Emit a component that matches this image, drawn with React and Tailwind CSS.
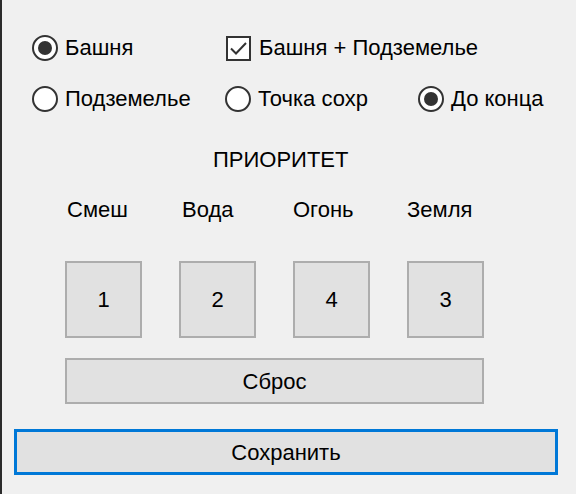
import React, { useState } from 'react';

const font = { fontFamily: '"Liberation Sans", Arial, sans-serif' };

function Radio({ checked, label, onClick }) {
  return (
    <div className="flex items-center gap-[7px] cursor-default" onClick={onClick}>
      <div className="w-[26px] h-[26px] rounded-full border-2 border-[#333333] bg-white flex items-center justify-center shrink-0">
        {checked && <div className="w-[14px] h-[14px] rounded-full bg-[#333333]" />}
      </div>
      <span className="text-[22px] leading-[26px] text-black whitespace-nowrap">{label}</span>
    </div>
  );
}

function Checkbox({ checked, label, onClick }) {
  return (
    <div className="flex items-center gap-[8px] cursor-default" onClick={onClick}>
      <div className="w-[25px] h-[25px] border-2 border-[#333333] bg-white flex items-center justify-center shrink-0">
        {checked && (
          <svg width="19" height="19" viewBox="0 0 19 19">
            <polyline points="2,9.5 7,14.5 17,4" fill="none" stroke="#333333" strokeWidth="2" />
          </svg>
        )}
      </div>
      <span className="text-[22px] leading-[26px] text-black whitespace-nowrap">{label}</span>
    </div>
  );
}

export default function App() {
  const [mode, setMode] = useState('tower');
  const [end, setEnd] = useState('end');
  const [both, setBoth] = useState(true);
  const [prio, setPrio] = useState(['1', '2', '4', '3']);

  const names = ['Смеш', 'Вода', 'Огонь', 'Земля'];

  return (
    <div className="w-[576px] h-[494px] flex overflow-hidden" style={font}>
      <div className="w-[2px] bg-[#2b2b2b]" />
      <div className="flex-1 bg-[#f0f0f0] flex flex-col">
        {/* mode options */}
        <div className="mt-[35px] pl-[30px] grid grid-cols-[193px_193px_auto] gap-y-[25px]">
          <Radio checked={mode === 'tower'} label="Башня" onClick={() => setMode('tower')} />
          <div className="col-span-2 pl-[1px]">
            <Checkbox checked={both} label="Башня + Подземелье" onClick={() => setBoth(!both)} />
          </div>
          <Radio checked={mode === 'dungeon'} label="Подземелье" onClick={() => setMode('dungeon')} />
          <Radio checked={end === 'save'} label="Точка сохр" onClick={() => setEnd('save')} />
          <Radio checked={end === 'end'} label="До конца" onClick={() => setEnd('end')} />
        </div>

        <div className="mt-[35px] pl-[211px] text-[22px] leading-[26px] text-black">ПРИОРИТЕТ</div>

        <div className="mt-[24px] pl-[63px] flex gap-[37px]">
          {names.map((n, i) => (
            <div key={n} className={'w-[77px] text-[22px] leading-[26px] text-black ' + (i === 0 ? 'pl-[2px]' : i === 1 ? 'pl-[3px]' : 'pl-[0px]')}>
              {n}
            </div>
          ))}
        </div>

        <div className="mt-[38px] pl-[63px] flex gap-[37px]">
          {prio.map((p, i) => (
            <button
              key={i}
              className="w-[77px] h-[77px] border-2 border-[#adadad] bg-[#e1e1e1] text-[22px] text-black flex items-center justify-center"
            >
              {p}
            </button>
          ))}
        </div>

        <div className="mt-[20px] pl-[63px]">
          <button
            className="w-[419px] h-[46px] border-2 border-[#adadad] bg-[#e1e1e1] text-[22px] text-black"
            onClick={() => setPrio(['1', '2', '3', '4'])}
          >
            Сброс
          </button>
        </div>

        <div className="mt-[25px] pl-[12px]">
          <button className="w-[544px] h-[46px] border-[3px] border-[#0078d7] bg-[#e1e1e1] text-[22px] text-black">
            Сохранить
          </button>
        </div>
      </div>
    </div>
  );
}
